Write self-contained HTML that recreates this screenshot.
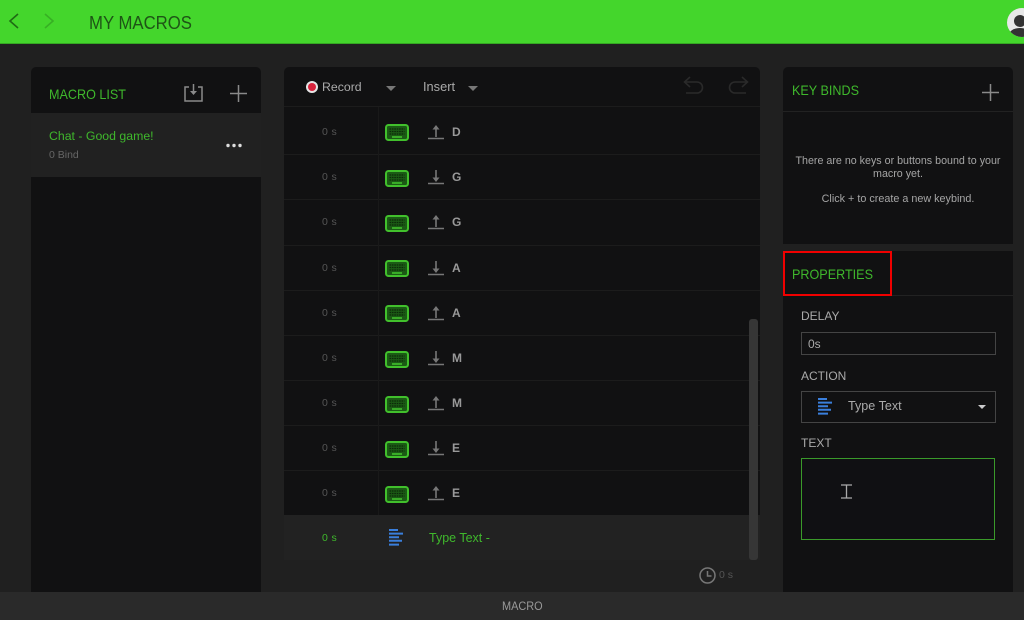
<!DOCTYPE html>
<html><head><meta charset="utf-8"><style>
*{box-sizing:border-box}
html,body{margin:0;padding:0}
body{width:1024px;height:620px;overflow:hidden;background:#202020;position:relative;font-family:"Liberation Sans",sans-serif}
.a{position:absolute;white-space:nowrap;line-height:1}
.p{position:absolute;background:#111112}
.h{font-size:14px;color:#3fb82c;transform:scaleX(.9);transform-origin:0 0}
.t{left:322px;font-size:10.5px;color:#555;letter-spacing:.4px}
.k{left:452px;font-size:12px;color:#999;font-weight:bold}
.s{position:absolute;left:284px;width:476px;height:1px;background:#1c1c1c}
svg{position:absolute;overflow:visible}
</style></head><body>
<svg width="0" height="0" style="left:0;top:0"><defs>
<symbol id="kb" viewBox="0 0 24 17"><rect x="1" y="1" width="22" height="15" rx="2.5" fill="#1b5a15" stroke="#41c02c" stroke-width="2"/><path d="M4.500 5h15M4.500 7.500h15M4.500 10h15" stroke="#0c2a09" stroke-width="1.200" stroke-dasharray="1.600 .8"/><path d="M7 13h10" stroke="#41c02c" stroke-width="1.600"/></symbol>
<symbol id="up" viewBox="0 0 16 16"><path d="M8 3v10" stroke="#777" stroke-width="1.600"/><path d="M4.500 5.500L8 1l3.500 4.500z" fill="#777"/><path d="M0 14.500h16" stroke="#777" stroke-width="1.500"/></symbol>
<symbol id="dn" viewBox="0 0 16 16"><path d="M8 1v10" stroke="#777" stroke-width="1.600"/><path d="M4.500 8.500L8 13l3.500-4.500z" fill="#777"/><path d="M0 14.500h16" stroke="#777" stroke-width="1.500"/></symbol>
<symbol id="tx" viewBox="0 0 15 18"><path d="M0 1h9M0 4.600h14M0 8.200h10M0 11.800h13M0 15.600h10" stroke="#3a7fdc" stroke-width="2"/></symbol>
</defs></svg>

<div class="a" style="left:0;top:0;width:1024px;height:44px;background:#44d62c;border-bottom:1px solid #35a823"></div>
<svg style="left:8px;top:13px" width="12" height="16" fill="none" stroke="#1f6b14" stroke-width="1.600"><path d="M10 1L2 8l8 7"/></svg>
<svg style="left:43px;top:13px" width="12" height="16" fill="none" stroke="#37b024" stroke-width="1.600"><path d="M2 1l8 7-8 7"/></svg>
<div class="a" style="left:89px;top:14px;font-size:18px;color:#1e5416;transform:scaleX(.93);transform-origin:0 0">MY MACROS</div>
<div class="a" style="left:1007px;top:8px;width:30px;height:29px;border-radius:50%;background:#e8e8e8;overflow:hidden"><div class="a" style="left:7px;top:7px;width:12px;height:12px;border-radius:50%;background:#333"></div><div class="a" style="left:2px;top:20px;width:22px;height:14px;border-radius:50%;background:#333"></div></div>

<!-- Macro list -->
<div class="p" style="left:31px;top:67px;width:230px;height:525px;border-radius:5px 5px 0 0"></div>
<div class="a" style="left:31px;top:113px;width:230px;height:64px;background:#212121"></div>
<div class="a h" style="left:49px;top:87px">MACRO LIST</div>
<svg style="left:184px;top:83px" width="20" height="20" fill="none" stroke="#8a8a8a" stroke-width="1.500"><path d="M5 4H1v14h17V4h-4"/><path d="M9.500 1v9"/><path d="M6 8h7l-3.500 4z" fill="#8a8a8a" stroke="none"/></svg>
<svg style="left:230px;top:85px" width="17" height="17" stroke="#8a8a8a" stroke-width="1.500"><path d="M8.500 0v17M0 8.500h17"/></svg>
<div class="a" style="left:49px;top:130px;font-size:12.300px;color:#3fb82c">Chat - Good game!</div>
<div class="a" style="left:49px;top:150px;font-size:10.500px;color:#666">0 Bind</div>
<svg style="left:226px;top:143px" width="16" height="5" fill="#ddd"><circle cx="2" cy="2.500" r="1.700"/><circle cx="8" cy="2.500" r="1.700"/><circle cx="14" cy="2.500" r="1.700"/></svg>

<!-- Center -->
<div class="p" style="left:284px;top:67px;width:476px;height:448px;border-radius:5px 5px 0 0"></div>
<div class="a" style="left:306px;top:81px;width:12px;height:12px;border-radius:50%;background:#e5e5e5"></div>
<div class="a" style="left:308px;top:83px;width:8px;height:8px;border-radius:50%;background:#d8233c"></div>
<div class="a" style="left:322px;top:81px;font-size:12.300px;color:#aaa">Record</div>
<svg style="left:386px;top:86px" width="10" height="5" fill="#777"><path d="M0 0h10L5 5z"/></svg>
<div class="a" style="left:423px;top:81px;font-size:12.800px;color:#aaa">Insert</div>
<svg style="left:468px;top:86px" width="10" height="5" fill="#777"><path d="M0 0h10L5 5z"/></svg>
<svg style="left:683px;top:76px" width="20" height="19" fill="none" stroke="#2a2a2a" stroke-width="1.600"><path d="M7 1L1.500 6 7 11"/><path d="M2 6h12a5 5 0 0 1 0 11H3"/></svg>
<svg style="left:729px;top:76px" width="20" height="19" fill="none" stroke="#2a2a2a" stroke-width="1.600"><path d="M13 1l5.500 5L13 11"/><path d="M18 6H6a5 5 0 0 0 0 11h11"/></svg>

<div class="s" style="top:106px"></div><div class="s" style="top:154px"></div><div class="s" style="top:199px"></div><div class="s" style="top:245px"></div><div class="s" style="top:290px"></div><div class="s" style="top:335px"></div><div class="s" style="top:380px"></div><div class="s" style="top:425px"></div><div class="s" style="top:470px"></div>
<div class="a" style="left:378px;top:107px;width:1px;height:408px;background:#191919"></div>

<div class="a t" style="top:127px">0 s</div><svg style="left:385px;top:124px" width="24" height="17"><use href="#kb"/></svg><svg style="left:428px;top:124px" width="16" height="16"><use href="#up"/></svg><div class="a k" style="top:126px">D</div>
<div class="a t" style="top:172px">0 s</div><svg style="left:385px;top:170px" width="24" height="17"><use href="#kb"/></svg><svg style="left:428px;top:169px" width="16" height="16"><use href="#dn"/></svg><div class="a k" style="top:171px">G</div>
<div class="a t" style="top:217px">0 s</div><svg style="left:385px;top:215px" width="24" height="17"><use href="#kb"/></svg><svg style="left:428px;top:214px" width="16" height="16"><use href="#up"/></svg><div class="a k" style="top:216px">G</div>
<div class="a t" style="top:263px">0 s</div><svg style="left:385px;top:260px" width="24" height="17"><use href="#kb"/></svg><svg style="left:428px;top:260px" width="16" height="16"><use href="#dn"/></svg><div class="a k" style="top:262px">A</div>
<div class="a t" style="top:308px">0 s</div><svg style="left:385px;top:305px" width="24" height="17"><use href="#kb"/></svg><svg style="left:428px;top:305px" width="16" height="16"><use href="#up"/></svg><div class="a k" style="top:307px">A</div>
<div class="a t" style="top:353px">0 s</div><svg style="left:385px;top:351px" width="24" height="17"><use href="#kb"/></svg><svg style="left:428px;top:350px" width="16" height="16"><use href="#dn"/></svg><div class="a k" style="top:352px">M</div>
<div class="a t" style="top:398px">0 s</div><svg style="left:385px;top:396px" width="24" height="17"><use href="#kb"/></svg><svg style="left:428px;top:395px" width="16" height="16"><use href="#up"/></svg><div class="a k" style="top:397px">M</div>
<div class="a t" style="top:443px">0 s</div><svg style="left:385px;top:441px" width="24" height="17"><use href="#kb"/></svg><svg style="left:428px;top:440px" width="16" height="16"><use href="#dn"/></svg><div class="a k" style="top:442px">E</div>
<div class="a t" style="top:488px">0 s</div><svg style="left:385px;top:486px" width="24" height="17"><use href="#kb"/></svg><svg style="left:428px;top:485px" width="16" height="16"><use href="#up"/></svg><div class="a k" style="top:487px">E</div>

<div class="a" style="left:284px;top:515px;width:476px;height:45px;background:#222"></div>
<div class="a t" style="top:533px;color:#3fb82c">0 s</div>
<svg style="left:389px;top:529px" width="15" height="18"><use href="#tx"/></svg>
<div class="a" style="left:429px;top:532px;font-size:12.500px;color:#3fb82c">Type Text -</div>
<div class="a" style="left:749px;top:319px;width:9px;height:241px;background:#363636;border-radius:3px"></div>
<svg style="left:699px;top:567px" width="17" height="17" fill="none" stroke="#777" stroke-width="1.500"><circle cx="8.500" cy="8.500" r="7.500"/><path d="M8.500 4v5h4"/></svg>
<div class="a" style="left:719px;top:570px;font-size:10.500px;color:#555">0 s</div>

<!-- Key binds -->
<div class="p" style="left:783px;top:67px;width:230px;height:177px;border-radius:5px 5px 0 0"></div>
<div class="a" style="left:783px;top:111px;width:230px;height:1px;background:#222"></div>
<div class="a h" style="left:792px;top:83px">KEY BINDS</div>
<svg style="left:982px;top:84px" width="17" height="17" stroke="#8a8a8a" stroke-width="1.500"><path d="M8.500 0v17M0 8.500h17"/></svg>
<div class="a" style="left:783px;top:155px;width:230px;text-align:center;font-size:10.700px;line-height:13px;color:#a5a5a5;white-space:normal;padding:0 6px">There are no keys or buttons bound to your macro yet.</div>
<div class="a" style="left:783px;top:194px;width:230px;text-align:center;font-size:10.800px;color:#a5a5a5">Click + to create a new keybind.</div>

<!-- Properties -->
<div class="p" style="left:783px;top:251px;width:230px;height:341px"></div>
<div class="a" style="left:783px;top:295px;width:230px;height:1px;background:#222"></div>
<div class="a" style="left:783px;top:251px;width:109px;height:45px;border:2px solid #f00000"></div>
<div class="a h" style="left:792px;top:267px">PROPERTIES</div>
<div class="a" style="left:801px;top:310px;font-size:12px;color:#aaa">DELAY</div>
<div class="a" style="left:801px;top:332px;width:195px;height:23px;border:1px solid #444"></div>
<div class="a" style="left:808px;top:338px;font-size:12px;color:#aaa">0s</div>
<div class="a" style="left:801px;top:370px;font-size:12px;color:#aaa">ACTION</div>
<div class="a" style="left:801px;top:391px;width:195px;height:32px;border:1px solid #444"></div>
<svg style="left:818px;top:398px" width="15" height="18"><use href="#tx"/></svg>
<div class="a" style="left:848px;top:400px;font-size:12.600px;color:#aaa">Type Text</div>
<svg style="left:978px;top:405px" width="8" height="4" fill="#ccc"><path d="M0 0h8L4 4z"/></svg>
<div class="a" style="left:801px;top:437px;font-size:12px;color:#aaa">TEXT</div>
<div class="a" style="left:801px;top:458px;width:194px;height:82px;border:1px solid #3a9a2a;background:#101013"></div>
<svg style="left:841px;top:484px" width="11" height="15" fill="none" stroke="#aaa" stroke-width="1.300"><path d="M0 1h11M0 14h11M5.500 1v13"/></svg>

<!-- Bottom -->
<div class="a" style="left:0;top:592px;width:1024px;height:28px;background:#2a2a2a"></div>
<div class="a" style="left:502px;top:600px;font-size:12px;color:#999;transform:scaleX(.91);transform-origin:0 0">MACRO</div>
</body></html>
